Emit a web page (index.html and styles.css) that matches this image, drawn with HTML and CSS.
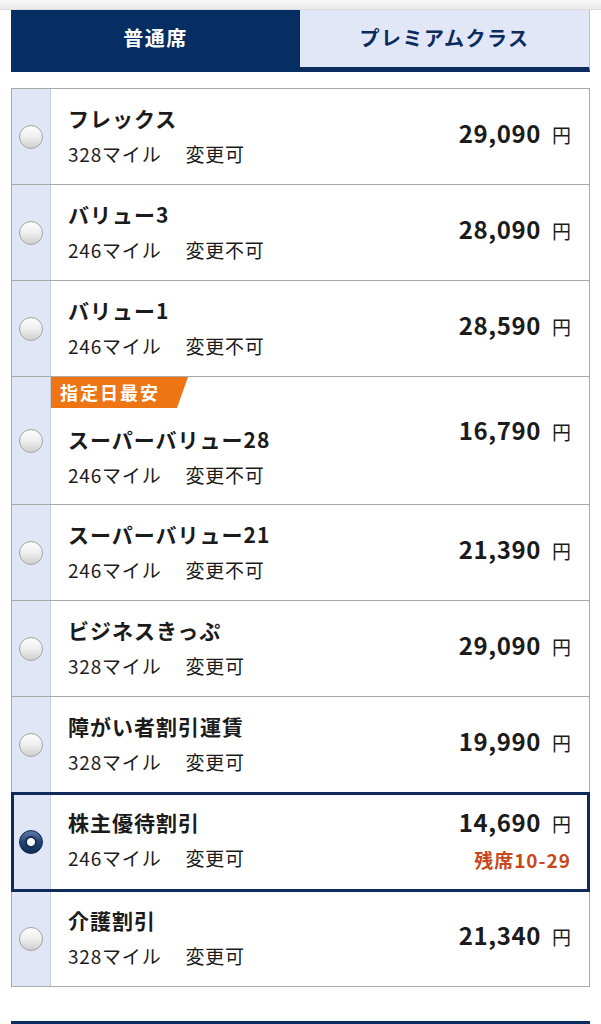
FILE: index.html
```html
<!DOCTYPE html>
<html lang="ja">
<head>
<meta charset="UTF-8">
<meta name="viewport" content="width=device-width, initial-scale=1.0">
<title>運賃選択</title>
<link rel="stylesheet" href="styles.css">
</head>
<body>
<div class="barra-superior"></div>
<div class="pagina">
<div class="pestanas">
<div class="pestana pestana-activa">普通席</div>
<div class="pestana">プレミアムクラス</div>
</div>

<ul class="tarifas">
<li class="tarifa">
<div class="tarifa-radio"><span class="radio"></span></div>
<div class="tarifa-cuerpo">
<div class="tarifa-info">
<div class="tarifa-nombre">フレックス</div>
<div class="tarifa-sub">328マイル<span class="tarifa-cambio">変更可</span></div>
</div>
<div class="tarifa-precio"><div class="precio">29,090<span class="yen">円</span></div></div>
</div>
</li>
<li class="tarifa">
<div class="tarifa-radio"><span class="radio"></span></div>
<div class="tarifa-cuerpo">
<div class="tarifa-info">
<div class="tarifa-nombre">バリュー3</div>
<div class="tarifa-sub">246マイル<span class="tarifa-cambio">変更不可</span></div>
</div>
<div class="tarifa-precio"><div class="precio">28,090<span class="yen">円</span></div></div>
</div>
</li>
<li class="tarifa">
<div class="tarifa-radio"><span class="radio"></span></div>
<div class="tarifa-cuerpo">
<div class="tarifa-info">
<div class="tarifa-nombre">バリュー1</div>
<div class="tarifa-sub">246マイル<span class="tarifa-cambio">変更不可</span></div>
</div>
<div class="tarifa-precio"><div class="precio">28,590<span class="yen">円</span></div></div>
</div>
</li>
<li class="tarifa">
<div class="tarifa-radio"><span class="radio"></span></div>
<div class="tarifa-cuerpo tarifa-cuerpo-etiqueta">
<div class="tarifa-info">
<div class="etiqueta">指定日最安</div>
<div class="tarifa-nombre">スーパーバリュー28</div>
<div class="tarifa-sub">246マイル<span class="tarifa-cambio">変更不可</span></div>
</div>
<div class="tarifa-precio"><div class="precio">16,790<span class="yen">円</span></div></div>
</div>
</li>
<li class="tarifa">
<div class="tarifa-radio"><span class="radio"></span></div>
<div class="tarifa-cuerpo">
<div class="tarifa-info">
<div class="tarifa-nombre">スーパーバリュー21</div>
<div class="tarifa-sub">246マイル<span class="tarifa-cambio">変更不可</span></div>
</div>
<div class="tarifa-precio"><div class="precio">21,390<span class="yen">円</span></div></div>
</div>
</li>
<li class="tarifa">
<div class="tarifa-radio"><span class="radio"></span></div>
<div class="tarifa-cuerpo">
<div class="tarifa-info">
<div class="tarifa-nombre">ビジネスきっぷ</div>
<div class="tarifa-sub">328マイル<span class="tarifa-cambio">変更可</span></div>
</div>
<div class="tarifa-precio"><div class="precio">29,090<span class="yen">円</span></div></div>
</div>
</li>
<li class="tarifa">
<div class="tarifa-radio"><span class="radio"></span></div>
<div class="tarifa-cuerpo">
<div class="tarifa-info">
<div class="tarifa-nombre">障がい者割引運賃</div>
<div class="tarifa-sub">328マイル<span class="tarifa-cambio">変更可</span></div>
</div>
<div class="tarifa-precio"><div class="precio">19,990<span class="yen">円</span></div></div>
</div>
</li>
<li class="tarifa tarifa-activa">
<div class="tarifa-radio"><span class="radio radio-activo"></span></div>
<div class="tarifa-cuerpo">
<div class="tarifa-info">
<div class="tarifa-nombre">株主優待割引</div>
<div class="tarifa-sub">246マイル<span class="tarifa-cambio">変更可</span></div>
</div>
<div class="tarifa-precio">
<div class="precio">14,690<span class="yen">円</span></div>
<div class="asientos">残席10-29</div>
</div>
</div>
</li>
<li class="tarifa">
<div class="tarifa-radio"><span class="radio"></span></div>
<div class="tarifa-cuerpo">
<div class="tarifa-info">
<div class="tarifa-nombre">介護割引</div>
<div class="tarifa-sub">328マイル<span class="tarifa-cambio">変更可</span></div>
</div>
<div class="tarifa-precio"><div class="precio">21,340<span class="yen">円</span></div></div>
</div>
</li>
</ul>

<div class="barra-siguiente"></div>
</div>
</body>
</html>
```

FILE: styles.css
```css
body {
    margin: 0;
    font-family: "Noto Sans CJK JP", "Noto Sans", sans-serif;
    color: #1b1b1b;
    background: #fff;
}

.barra-superior {
    height: 9px;
    background: linear-gradient(#f8f8f8, #ebebeb);
    border-bottom: 1px solid #dcdcdc;
}

.pagina {
    padding: 0 11px;
}

.pestanas {
    display: flex;
}

.pestana {
    flex: 1;
    height: 54px;
    padding-bottom: 3px;
    display: flex;
    align-items: center;
    justify-content: center;
    font-size: 20px;
    font-weight: 700;
    letter-spacing: 1.5px;
    color: #0b2b5c;
    background: #e1e7f7;
    border-right: 1px solid #b9c0d6;
    border-bottom: 5px solid #0a2c5e;
}

.pestana-activa {
    background: #062e63;
    color: #fff;
    border-right: none;
    border-bottom-color: #062e63;
}

.tarifas {
    list-style: none;
    margin: 16px 0 0;
    padding: 0;
    border: 1px solid #a9a9a9;
    border-bottom: none;
}

.tarifa {
    display: flex;
    border-bottom: 1px solid #a9a9a9;
}

.tarifa-activa {
    outline: 3px solid #102a5a;
    outline-offset: -2px;
}

.tarifa-radio {
    width: 38px;
    flex-shrink: 0;
    background: #e1e6f6;
    border-right: 1px solid #c6cce0;
    display: flex;
    align-items: center;
    justify-content: center;
}

.radio {
    width: 24px;
    height: 24px;
    border-radius: 50%;
    border: 1px solid #a3a3a3;
    background: linear-gradient(#ffffff, #f0f0f0 45%, #cfcfcf);
    box-sizing: border-box;
}

.radio-activo {
    border: 1px solid #0e2448;
    background: radial-gradient(circle, #ffffff 0 3.5px, #1c2f4f 4.5px 5.5px, transparent 6.5px),
        linear-gradient(#5c7aa6, #234675 50%, #112c55);
}

.tarifa-cuerpo {
    flex: 1;
    display: flex;
    justify-content: space-between;
    padding: 16px 18px 17px 17px;
}

.tarifa-cuerpo-etiqueta {
    padding-top: 0;
    padding-bottom: 16px;
}

.etiqueta {
    width: 137px;
    height: 31px;
    margin: 0 0 18px -17px;
    padding-left: 9px;
    box-sizing: border-box;
    background: #ee7514;
    color: #fff;
    font-size: 18px;
    font-weight: 700;
    letter-spacing: 2px;
    line-height: 31px;
    clip-path: polygon(0 0, 100% 0, calc(100% - 11px) 100%, 0 100%);
}

.tarifa-nombre {
    font-size: 21px;
    font-weight: 700;
    letter-spacing: 1px;
    line-height: 26px;
}

.tarifa-sub {
    margin-top: 10px;
    font-size: 19px;
    letter-spacing: 0.8px;
    line-height: 26px;
}

.tarifa-cambio {
    margin-left: 24px;
}

.tarifa-precio {
    display: flex;
    flex-direction: column;
    justify-content: center;
    align-items: flex-end;
    gap: 10px;
}

.precio {
    font-size: 24px;
    font-weight: 700;
    letter-spacing: 0.6px;
    line-height: 26px;
}

.precio:only-child {
    margin-bottom: 4px;
}

.yen {
    margin-left: 11px;
    font-size: 19px;
    font-weight: 400;
    letter-spacing: 0;
}

.asientos {
    font-size: 19px;
    font-weight: 700;
    letter-spacing: 1px;
    color: #c9471b;
    line-height: 26px;
}

.barra-siguiente {
    margin-top: 34px;
    height: 40px;
    background: #0a2c5e;
}
```
